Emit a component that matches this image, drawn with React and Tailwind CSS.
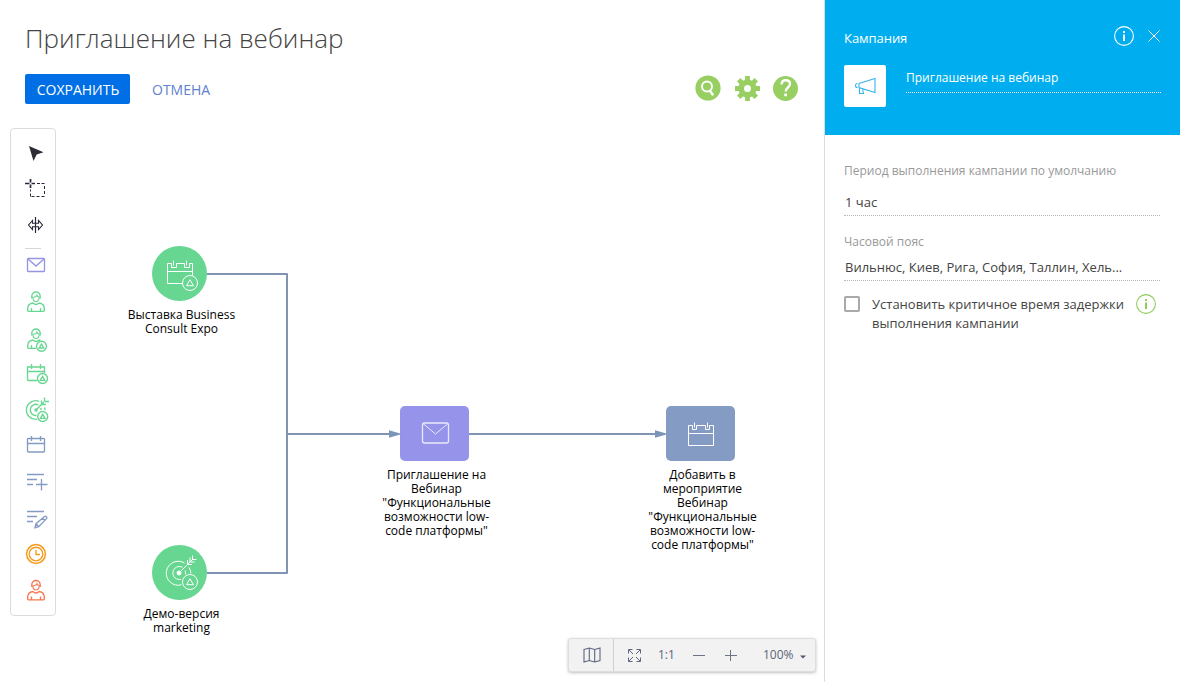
import React from "react";

const TOOL = "ml-3 block h-[26px] w-[26px] shrink-0 overflow-visible";

function Tool({ className, children }) {
  return (
    <svg viewBox="0 0 26 26" fill="none" stroke="currentColor" strokeWidth="1.35" className={`${TOOL} ${className}`}>
      {children}
    </svg>
  );
}

function Badge({ x, y, r = 5 }) {
  const k = r / 5;
  return (
    <g>
      <circle cx={x} cy={y} r={r} />
      <path d={`M${x} ${y - 2.2 * k}l${2.3 * k} ${4 * k}h${-4.6 * k}z`} />
    </g>
  );
}

function Head() {
  return (
    <g>
      <path d="M8.800 9.500V7.200a4.200 4.200 0 0 1 8.400 0v2.300" />
      <path d="M9.900 8.200c2 .1 3.500-.8 4-2 .4 1.100 1.200 1.700 2.300 1.800 0 2.700-1.200 4.500-3.200 4.500S9.900 10.800 9.900 8.200z" strokeWidth="1.100" />
    </g>
  );
}

function Person() {
  return (
    <g>
      <Head />
      <path d="M10 14C6.500 14.500 4.700 16.500 4.700 19.700v1.800a.8.800 0 0 0 .8.800h15a.8.800 0 0 0 .8-.8v-1.800c0-3.200-1.800-5.200-5.300-5.700M10 14q3 3 6 0M8.500 19v3M17.500 19v3" />
    </g>
  );
}

function Toolbox() {
  return (
    <div className="ml-[10px] flex h-[488px] w-[46px] flex-col rounded-[4px] border border-[#dcdcdc] bg-white">
      <Tool className="mt-[11px] text-[#2d2e35]">
        <path d="M6 6l14.500 6.300-6.800 2.200-3.200 6.500z" fill="currentColor" stroke="none" />
      </Tool>
      <Tool className="mt-[9px] text-[#2f2238]">
        <path d="M2 8.500h4.500M8.500 8.500H12M7.500 4v3.500M7.500 9.500V13" strokeWidth="1.700" />
        <path d="M14 8.500h3M18.500 8.500h3M21.500 11v3M21.500 16v3M21.500 21.500h-3M16.500 21.500h-3M11.500 21.500h-3M7.500 21.500v-3M7.500 16.500v-2" strokeWidth="1" />
      </Tool>
      <Tool className="mt-[11px] text-[#2d2638]">
        <path d="M12.500 5v16" strokeWidth="1.200" />
        <path d="M9.500 8.500L5.500 13l4 4.500v-2.700h6v2.700l4-4.500-4-4.500v2.700h-6z" strokeWidth="1.100" />
      </Tool>
      <div className="ml-[14px] mt-[10px] h-px w-4 shrink-0 bg-[#d6d6d6]" />
      <Tool className="mt-[3px] text-[#9594e8]">
        <rect x="4.500" y="6.500" width="17" height="13" rx="1" />
        <path d="M5 7l8 7L21 7" />
      </Tool>
      <Tool className="mt-[11px] text-[#66d690]"><Person /></Tool>
      <Tool className="mt-[12px] text-[#66d690]">
        <g transform="translate(0 -1)">
          <Head />
          <path d="M10 14C6.500 14.500 4.700 16.500 4.700 19.700v1.800a.8.800 0 0 0 .8.800h7.500M10 14q3 3 6 0M16 14l1.500.4M8.500 19v3" />
        </g>
        <Badge x={18.500} y={19.200} />
      </Tool>
      <Tool className="mt-[8px] text-[#66d690]">
        <path d="M14 19.500H5.500a1 1 0 0 1-1-1V6h17v6M4.500 10.500h17M8.500 3v5M17.500 3v5" />
        <Badge x={19.500} y={17.500} />
      </Tool>
      <Tool className="mt-[10px] text-[#66d690]">
        <path d="M16 4.300A9.300 9.300 0 1 0 14 22.200M15.500 8A5.600 5.600 0 1 0 13.500 18.500M13 13l8-8M21.500 4.500V.5M21.500 4.500H26M18.500 7.500V3.500M18.500 7.500h4.500M21.500 10.500l.7 2.500M17.700 11l.5 2" />
        <circle cx="13" cy="13" r="1" fill="currentColor" />
        <Badge x={19.700} y={19.500} />
      </Tool>
      <Tool className="mt-[8px] text-[#849cc4]">
        <rect x="4.500" y="7.500" width="17" height="13.500" rx="1" />
        <path d="M4.500 12.500h17M8.500 5v5M17.500 5v5" />
      </Tool>
      <Tool className="mt-[12px] text-[#849cc4]">
        <path d="M4 5.500h17M4 10.500h10M4 15.500h6M13 15.500h11.500M18.500 10v11.500" />
      </Tool>
      <Tool className="mt-[11px] text-[#849cc4]">
        <path d="M4 5.500h17M4 10.500h10M4 15.500h6" />
        <path d="M12 21.700l1-4 8.500-7.200a1.200 1.200 0 0 1 1.700 0l.3.400a1.200 1.200 0 0 1 0 1.700L15.800 20.700zM13 17.700l2.800 3M19.500 12.200l2.500 2.600" />
      </Tool>
      <Tool className="mt-[9px] text-[#f59a1b]">
        <circle cx="13" cy="13" r="9.400" strokeWidth="1.500" />
        <circle cx="13" cy="13" r="6.800" />
        <path d="M13 9v4.500h4" />
      </Tool>
      <Tool className="mt-[10px] text-[#f8764f]"><g transform="translate(0 .5)"><Person /></g></Tool>
    </div>
  );
}

function Label({ className, lines }) {
  return (
    <div className={`absolute w-[139px] text-center text-[12px] leading-[14px] text-black ${className}`}>
      {lines.map((l) => (
        <div key={l} className="whitespace-nowrap">{l}</div>
      ))}
    </div>
  );
}

const NODE = "absolute block";

function Canvas() {
  return (
    <div className="relative h-[554px]">
      <Toolbox />

      <svg className="absolute left-[152px] top-[118px] block" width="55" height="55" viewBox="0 0 55 55" fill="none" stroke="#fff">
        <circle cx="27.500" cy="27.500" r="27.500" fill="#66d690" stroke="none" />
        <path d="M30 37.500H15.500v-20h4v4h5v-4h8v4h5v-4h3v12M15.500 25.500h25M21.500 14.500v5M34.500 14.500v5" strokeWidth="1" />
        <Badge x={38} y={37} r={7.500} />
      </svg>
      <Label className="left-[112px] top-[180px]" lines={["Выставка Business", "Consult Expo"]} />

      <svg className="absolute left-[152px] top-[417px] block" width="55" height="55" viewBox="0 0 55 55" fill="none" stroke="#fff">
        <circle cx="27.500" cy="27.500" r="27.500" fill="#66d690" stroke="none" />
        <path d="M32.500 18A12 12 0 1 0 29.500 39.800M30.500 22.300A6.500 6.500 0 1 0 29 34.300M27 28L41 14M35.500 19.500v-4.500M35.500 19.500h4.500M38 17v-4.500M38 17h4.500M40.500 14.500V10.500M40.500 14.500h4M37 22.500q1.800 2.500 1.800 6M33 25.500q.8 2 .4 4" />
        <circle cx="27" cy="28" r="2" fill="#fff" />
        <Badge x={38} y={37} r={7.500} />
      </svg>
      <Label className="left-[112px] top-[479px]" lines={["Демо-версия", "marketing"]} />

      <svg className={`${NODE} left-[400px] top-[278px]`} width="69" height="55" viewBox="0 0 69 55" fill="none" stroke="#e9e9fc">
        <rect width="69" height="55" rx="5" fill="#9594ea" stroke="none" />
        <rect x="22.500" y="17" width="26" height="20" rx="2" strokeWidth="1.300" />
        <path d="M23 17.500l12.500 10.500L48 17.500" />
      </svg>
      <Label
        className="left-[367px] top-[340px]"
        lines={["Приглашение на", "Вебинар", "\"Функциональные", "возможности low-", "code платформы\""]}
      />

      <svg className={`${NODE} left-[666px] top-[278px]`} width="69" height="55" viewBox="0 0 69 55" fill="none" stroke="#fff">
        <rect width="69" height="55" rx="5" fill="#849cc4" stroke="none" />
        <path d="M22.500 39.500v-20h4v4h4v-4h9v4h4v-4h4v20zM22.500 27.500h25M28.500 16.500v5M41.500 16.500v5" />
      </svg>
      <Label
        className="left-[633px] top-[340px]"
        lines={["Добавить в", "мероприятие", "Вебинар", "\"Функциональные", "возможности low-", "code платформы\""]}
      />

      <svg className="pointer-events-none absolute left-0 top-0 block" width="824" height="554" viewBox="0 128 824 554" fill="none" stroke="#8093b3" strokeWidth="2">
        <path d="M207 274H287V573H207M287 434H392M469 434H658" strokeLinejoin="round" />
        <path d="M389 430.300L402 434L389 437.700zM655 430.300L668 434L655 437.700z" fill="#7b95b8" stroke="none" />
      </svg>

      <div className="absolute left-[568px] top-[510px] flex h-[34px] w-[248px] items-center rounded-[3px] border border-[#dedede] bg-[#f2f2f2] text-[12px] text-[#5c6479] shadow-[0_1px_3px_rgba(0,0,0,0.25)]">
        <div className="flex h-full w-[45px] items-center justify-center border-r border-[#d0d0d0]">
          <svg width="18" height="16" viewBox="0 0 18 16" fill="none" stroke="#5e6680" strokeWidth="1.100" className="ml-0.5">
            <path d="M1 2.500L6.300 1l5.400 1.500L17 1v12.500L11.700 15l-5.400-1.500L1 15zM6.300 1v12.500M11.700 2.500V15" />
          </svg>
        </div>
        <svg width="13" height="13" viewBox="0 0 13 13" fill="none" stroke="#5e6680" className="ml-[14px]">
          <path d="M.5 4.500v-4h4M8.500.5h4v4M12.500 8.500v4h-4M4.500 12.500h-4v-4M1 1l4 4M12 1L8 5M12 12L8 8M1 12l4-4" />
        </svg>
        <span className="ml-[17px] w-[20px]">1:1</span>
        <svg width="12" height="12" viewBox="0 0 12 12" stroke="#6d7387" className="ml-[15px]"><path d="M0 6.500h12" /></svg>
        <svg width="12" height="12" viewBox="0 0 12 12" stroke="#6d7387" className="ml-[20px]"><path d="M0 6.500h12M5.500 1v11" /></svg>
        <span className="ml-[26px] w-[32px]">100%</span>
        <svg width="6" height="4" viewBox="0 0 6 4" className="ml-[5px] mt-[3px]"><path d="M0 .5h6L3 3.500z" fill="#4f566b" /></svg>
      </div>
    </div>
  );
}

function Header() {
  return (
    <header className="flex h-32 flex-col pl-[25px]">
      <h1 className="mt-[20px] h-[36px] whitespace-nowrap text-[26px] font-light leading-[36px] text-[#444]">Приглашение на вебинар</h1>
      <div className="mt-[18px] flex h-[30px] items-center">
        <button className="h-[30px] w-[105px] rounded-[2px] bg-[#006fe6] pl-px text-[14px] leading-[32px] text-white">СОХРАНИТЬ</button>
        <button className="ml-[22px] h-[30px] text-[14px] leading-[32px] text-[#5f80cf]">ОТМЕНА</button>
        <div className="ml-auto mr-[25px] mt-[-3px] flex gap-[13px]">
          <svg width="26" height="26" viewBox="0 0 26 26" fill="none">
            <circle cx="13" cy="13" r="12.600" fill="#97cf62" />
            <circle cx="12" cy="11.500" r="5" stroke="#fff" strokeWidth="1.900" />
            <path d="M14.700 15.500l3.500 4.700" stroke="#fff" strokeWidth="2.500" />
          </svg>
          <svg width="26" height="26" viewBox="0 0 26 26" fill="none">
            <circle cx="13.500" cy="13.500" r="6.300" stroke="#97cf62" strokeWidth="5.600" />
            <path d="M13.500 1v4M13.500 22v4M1 13.500h4M22 13.500h4M4.700 4.700l3 3M19.300 19.300l3 3M22.300 4.700l-3 3M7.700 19.300l-3 3" stroke="#97cf62" strokeWidth="4.800" />
          </svg>
          <svg width="26" height="26" viewBox="0 0 26 26" fill="none">
            <circle cx="12.500" cy="13.500" r="12.500" fill="#97cf62" />
            <path d="M8.500 9.500C8.700 6.500 10.500 5.200 12.800 5.200c2.500 0 4.200 1.500 4.200 3.700 0 3.300-4.300 3.600-4.300 7.600" stroke="#fff" strokeWidth="2.400" />
            <path d="M11.300 18.500h2.700v2.700h-2.700z" fill="#fff" />
          </svg>
        </div>
      </div>
    </header>
  );
}

function Info({ className }) {
  return (
    <svg width="20" height="20" viewBox="0 0 20 20" fill="none" stroke="currentColor" className={className}>
      <circle cx="10" cy="10" r="9.400" strokeWidth="1.100" />
      <path d="M10 5v2M10 8.500v6.500" strokeWidth="2" />
    </svg>
  );
}

function SidePanel() {
  return (
    <aside className="flex h-[682px] w-[356px] flex-col border-l border-[#dcdcdc] bg-white">
      <div className="h-[135px] bg-[#00aeef] pl-[19px] pr-[18px] pt-[26px] text-white">
        <div className="flex h-5 items-center">
          <span className="mt-[3px] text-[13px] font-medium leading-5 tracking-[-0.05px]">Кампания</span>
          <Info className="ml-auto" />
          <svg width="12" height="12" viewBox="0 0 12 12" stroke="#fff" strokeWidth="1" className="ml-[14px] mr-[2px]">
            <path d="M.5.5l11 11M11.500.5l-11 11" />
          </svg>
        </div>
        <div className="mt-[19px] flex">
          <div className="flex h-[42px] w-[42px] items-center justify-center rounded-[2px] bg-white">
            <svg width="22" height="18" viewBox="0 0 22 18" fill="none" stroke="#35b5ee" strokeWidth="1.100">
              <path d="M5 6.500L21 1.500v14L5 10.500zM3.500 6.500q-2 0-2 2t2 2M5.500 11v5.500h4L8.500 12" />
            </svg>
          </div>
          <div className="ml-[20px] h-[28px] w-[255px] whitespace-nowrap border-b border-dotted border-white text-[12px] font-medium leading-[26px]">
            Приглашение на вебинар
          </div>
        </div>
      </div>
      <div className="flex flex-col pl-[19px] pr-[20px] text-[13px] text-[#444]">
        <div className="mt-[26px] h-5 whitespace-nowrap text-[12px] leading-5 text-[#999]">Период выполнения кампании по умолчанию</div>
        <div className="mt-[11px] h-[24px] border-b border-dotted border-[#b5b5b5] pl-px leading-5">1 час</div>
        <div className="mt-[16px] h-5 text-[12px] leading-5 text-[#999]">Часовой пояс</div>
        <div className="mt-[5px] h-[24px] whitespace-nowrap border-b border-dotted border-[#b5b5b5] pl-px leading-5">
          Вильнюс, Киев, Рига, София, Таллин, Хель...
        </div>
        <div className="mt-[14px] flex">
          <div className="mt-px h-4 w-4 rounded-[2px] border-2 border-[#a9a9a9]" />
          <div className="ml-3 whitespace-nowrap leading-[19px]">
            Установить критичное время задержки
            <br />
            выполнения кампании
          </div>
          <Info className="ml-auto mr-[4px] mt-[-1px] text-[#8ecb5c]" />
        </div>
      </div>
    </aside>
  );
}

export default function App() {
  return (
    <div className="flex h-[682px] w-[1180px] overflow-hidden bg-white font-['Open_Sans',sans-serif]">
      <main className="flex w-[824px] flex-col">
        <Header />
        <Canvas />
      </main>
      <SidePanel />
    </div>
  );
}
